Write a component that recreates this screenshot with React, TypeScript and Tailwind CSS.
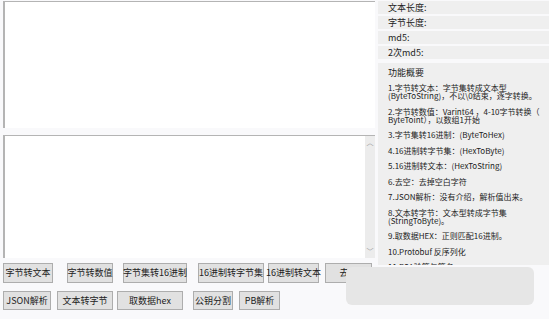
const row1 = [
  { label: "字节转文本", w: "w-[50px]", ml: "ml-0" },
  { label: "字节转数值", w: "w-[46px]", ml: "ml-[14px]" },
  { label: "字节集转16进制", w: "w-[64px]", ml: "ml-[10px]" },
  { label: "16进制转字节集", w: "w-[66px]", ml: "ml-[11px]" },
  { label: "16进制转文本", w: "w-[51px]", ml: "ml-[4px]" },
  { label: "去空", w: "w-[47px]", ml: "ml-[6px]" },
];

const row2 = [
  { label: "JSON解析", w: "w-[48px]", ml: "ml-0" },
  { label: "文本转字节", w: "w-[56px]", ml: "ml-[6px]" },
  { label: "取数据hex", w: "w-[66px]", ml: "ml-[4px]" },
  { label: "公钥分割", w: "w-[40px]", ml: "ml-[10px]" },
  { label: "PB解析", w: "w-[41px]", ml: "ml-[6px]" },
];

const features = [
  "1.字节转文本：字节集转成文本型 (ByteToString)，不以\\0结束，逐字转换。",
  "2.字节转数值：Varint64 ，4-10字节转换（ ByteToint），以数组1开始",
  "3.字节集转16进制：(ByteToHex)",
  "4.16进制转字节集：(HexToByte)",
  "5.16进制转文本：(HexToString)",
  "6.去空：去掉空白字符",
  "7.JSON解析：没有介绍，解析值出来。",
  "8.文本转字节：文本型转成字节集 (StringToByte)。",
  "9.取数据HEX：正则匹配16进制。",
  "10.Protobuf 反序列化",
  "11.RSA验签与签名",
];

const infoRows = ["文本长度:", "字节长度:", "md5:", "2次md5:"];

function Btn({ label, w, ml, h }: { label: string; w: string; ml: string; h: string }) {
  return (
    <div
      className={`${w} ${ml} ${h} flex shrink-0 items-center justify-center border border-[#adadad] bg-[#e1e1e1] text-[9px] text-[#222] whitespace-nowrap`}
    >
      {label}
    </div>
  );
}

export default function App() {
  return (
    <div className="relative h-[319px] w-[549px] overflow-hidden bg-[#f9f9fb] font-['Noto_Sans_CJK_SC',sans-serif] text-[#222]">
      <div className="flex">
        {/* left column */}
        <div className="w-[375px] shrink-0 pl-[3px] pt-[1px]">
          <div className="h-[127px] border-l-2 border-t border-[#b4b4b4] bg-white" />
          <div className="mt-[7px] flex h-[123px] justify-end border-l-2 border-t border-[#b4b4b4] bg-white">
            <div className="flex w-[10px] flex-col items-center justify-between bg-[#ececec] py-[3px] text-[7px] leading-none text-[#9a9a9a]">
              <span>︿</span>
              <span>﹀</span>
            </div>
          </div>
          <div className="mt-[5px] flex">
            {row1.map((b) => (
              <Btn key={b.label} {...b} h="h-[20px]" />
            ))}
          </div>
          <div className="mt-[8px] flex">
            {row2.map((b) => (
              <Btn key={b.label} {...b} h="h-[19px]" />
            ))}
          </div>
        </div>

        {/* right column */}
        <div className="flex-1 pl-[3px] pt-[1px]">
          <div className="flex flex-col gap-[2px]">
            {infoRows.map((r) => (
              <div key={r} className="flex h-[13px] items-center bg-[#efefef] pl-[10px] text-[9px]">
                {r}
              </div>
            ))}
          </div>
          <div className="mt-[4px] h-[202px] overflow-hidden bg-[#efefef] pl-[10px] pr-[6px] pt-[5px]">
            <div className="text-[9px] leading-[10px]">功能概要</div>
            <div className="mt-[6px] flex flex-col gap-[7.5px]">
              {features.map((f) => (
                <div key={f} className="text-[8px] leading-[8px]">
                  {f}
                </div>
              ))}
            </div>
          </div>
        </div>
      </div>

      {/* toast overlay */}
      <div className="absolute left-[346px] top-[267px] h-[38px] w-[188px] rounded-[6px] bg-[#e6e6e6]" />
    </div>
  );
}
